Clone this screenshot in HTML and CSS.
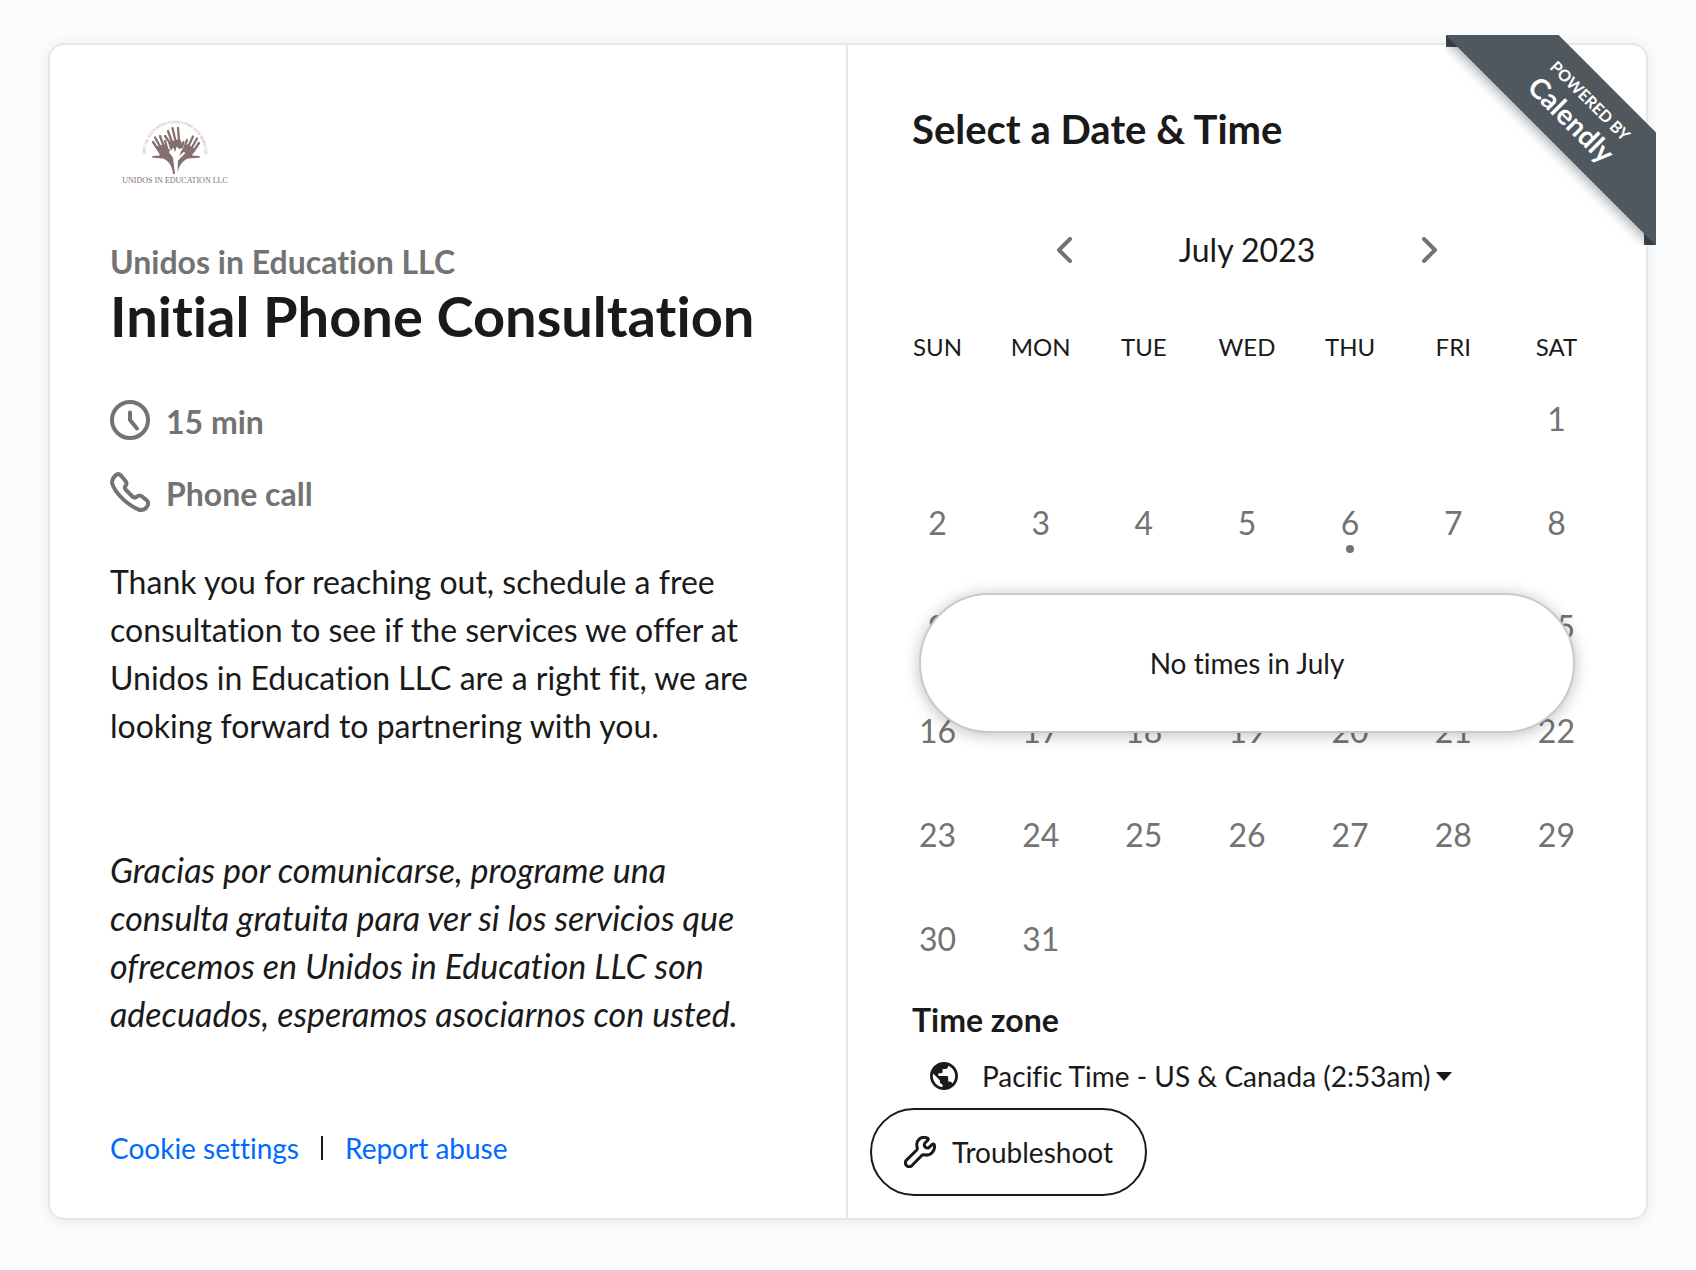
FILE: index.html
```html
<!DOCTYPE html>
<html lang="en">
    <head>
        <meta charset="utf-8">
        <meta name="viewport" content="width=device-width, initial-scale=1">
        <title>Initial Phone Consultation</title>
        <link rel="stylesheet" href="styles.css">
    </head>
    <body>
        <main class="booking">
            <!-- Event details -->
            <section class="details">
                <svg class="logo" viewBox="10 5 130 95" role="img" aria-label="Unidos in Education LLC">
                    <path id="logoArc" d="M47 62 A29.500 29.500 0 1 1 103 62" fill="none"/>
                    <text class="logo-ring"><textPath href="#logoArc" startOffset="50%" text-anchor="middle">SPECIAL EDUCATION CONSULTING AND SERVICES</textPath></text>
                    <g fill="#86706f">
                        <path d="M73 74 C72.500 68 70 61 63 58.500 L53 57.800 Q51 56.800 53 56 L60 55.500 L56 47 L64 44 L70 50 L73 58 L75 74 Z"/>
                        <path d="M77.500 74 C78 67 82 61 88 58.500 L99 57.800 Q101 56.800 99 56 L92 55.500 L95 49 L87 44 L81 51 L78 60 Z"/>
                        <path d="M68 42 L80 39 L83 46 L81 49 L77 48 L75 52 L70 49 Z"/>
                    </g>
                    <g fill="none" stroke="#86706f" stroke-linecap="round" stroke-width="2.300">
                        <path d="M59 51 L53 42M61 48 L55 37.500M64 47 L60 36M67 48 L65 41"/>
                        <path d="M70 43 L65 36M72 42 L68 31M75.500 41 L72.500 28M79 41 L78 28M82 47 L83.500 42"/>
                        <path d="M93 52 L99 43M91 49 L97 38.500M88 47 L93 36.500M84 49 L87 40"/>
                    </g>
                    <path class="logo-hand" d="M76 73 V58M75 58 L70 52M75 57 L73 49M76 56 L77 48M78 57 L80 50M78 59 L84 53"/>
                    <text class="logo-name" x="75" y="83" text-anchor="middle">UNIDOS IN EDUCATION LLC</text>
                </svg>
                <h4 class="host">Unidos in Education LLC</h4>
                <h1 class="event-name">Initial Phone Consultation</h1>
                <ul class="facts">
                    <li>
                        <svg class="fact-icon" viewBox="0 0 40 40" aria-hidden="true">
                            <circle cx="20" cy="20" r="18"/>
                            <path d="M20 12.500 V20 L27 28.500"/>
                        </svg>
                        15 min
                    </li>
                    <li>
                        <svg class="fact-icon" viewBox="0 0 40 40" aria-hidden="true">
                            <path d="M4.500 4.500 L6 3 Q8.500 1 11 3.500 L15.500 9 Q17.500 11.500 15.500 14 Q14 16 16 18 L23 25 Q25 26.500 27 24.500 Q29.500 22.500 32 24.500 L37 28.500 Q39.500 31.500 37 34.500 L36 36 Q33 39 28.500 37.500 Q18 33 10 24 Q4 17.500 2.200 11.500 Q1.500 7.500 4.500 4.500 Z"/>
                        </svg>
                        Phone call
                    </li>
                </ul>
                <div class="description">
                    <p>Thank you for reaching out, schedule a free<br>
                        consultation to see if the services we offer at<br>
                        Unidos in Education LLC are a right fit, we are<br>
                        looking forward to partnering with you.</p>
                    <p lang="es"><em>Gracias por comunicarse, programe una<br>
                        consulta gratuita para ver si los servicios que<br>
                        ofrecemos en Unidos in Education LLC son<br>
                        adecuados, esperamos asociarnos con usted.</em></p>
                </div>
                <footer class="links">
                    <a href="#cookies">Cookie settings</a>
                    <span class="bar"></span>
                    <a href="#report">Report abuse</a>
                </footer>
            </section>

            <!-- Date picker -->
            <section class="picker">
                <h2>Select a Date &amp; Time</h2>
                <div class="month">
                    <button type="button" class="arrow" aria-label="Previous month">
                        <svg viewBox="0 0 16 26"><path d="M14 2 L3 13 L14 24"/></svg>
                    </button>
                    <div class="month-name">July 2023</div>
                    <button type="button" class="arrow" aria-label="Next month">
                        <svg viewBox="0 0 16 26"><path d="M2 2 L13 13 L2 24"/></svg>
                    </button>
                </div>
                <div class="calendar">
                    <table>
                        <thead>
                            <tr><th>SUN</th><th>MON</th><th>TUE</th><th>WED</th><th>THU</th><th>FRI</th><th>SAT</th></tr>
                        </thead>
                        <tbody>
                            <tr>
                                <td></td><td></td><td></td><td></td><td></td><td></td>
                                <td><button type="button">1</button></td>
                            </tr>
                            <tr>
                                <td><button type="button">2</button></td>
                                <td><button type="button">3</button></td>
                                <td><button type="button">4</button></td>
                                <td><button type="button">5</button></td>
                                <td><button type="button" class="today">6</button></td>
                                <td><button type="button">7</button></td>
                                <td><button type="button">8</button></td>
                            </tr>
                            <tr>
                                <td><button type="button">9</button></td>
                                <td><button type="button">10</button></td>
                                <td><button type="button">11</button></td>
                                <td><button type="button">12</button></td>
                                <td><button type="button">13</button></td>
                                <td><button type="button">14</button></td>
                                <td><button type="button">15</button></td>
                            </tr>
                            <tr>
                                <td><button type="button">16</button></td>
                                <td><button type="button">17</button></td>
                                <td><button type="button">18</button></td>
                                <td><button type="button">19</button></td>
                                <td><button type="button">20</button></td>
                                <td><button type="button">21</button></td>
                                <td><button type="button">22</button></td>
                            </tr>
                            <tr>
                                <td><button type="button">23</button></td>
                                <td><button type="button">24</button></td>
                                <td><button type="button">25</button></td>
                                <td><button type="button">26</button></td>
                                <td><button type="button">27</button></td>
                                <td><button type="button">28</button></td>
                                <td><button type="button">29</button></td>
                            </tr>
                            <tr>
                                <td><button type="button">30</button></td>
                                <td><button type="button">31</button></td>
                                <td></td><td></td><td></td><td></td><td></td>
                            </tr>
                        </tbody>
                    </table>
                    <div class="notice" role="status">No times in July</div>
                </div>
                <label class="zone-label" for="timezone">Time zone</label>
                <div class="zone">
                    <svg class="globe" viewBox="2 2 20 20" aria-hidden="true"><path d="M12 2C6.480 2 2 6.480 2 12s4.480 10 10 10 10-4.480 10-10S17.520 2 12 2zm-1 17.930c-3.950-.49-7-3.850-7-7.930 0-.62.080-1.210.21-1.790L9 15v1c0 1.100.9 2 2 2v1.930zm6.900-2.540c-.26-.81-1-1.390-1.900-1.390h-1v-3c0-.55-.45-1-1-1H8v-2h2c.55 0 1-.45 1-1V7h2c1.100 0 2-.9 2-2v-.41c2.930 1.190 5 4.060 5 7.410 0 2.080-.8 3.970-2.100 5.390z"/></svg>
                    <select id="timezone" name="timezone">
                        <option>Pacific Time - US &amp; Canada (2:53am)</option>
                    </select>
                    <svg class="caret" viewBox="0 0 16 9" aria-hidden="true"><path d="M0 0 H16 L8 9 Z"/></svg>
                </div>
                <button type="button" class="troubleshoot">
                    <svg viewBox="0 0 32 32" aria-hidden="true"><path d="M22.500 1.800 Q17 0 13.800 4.800 Q12 8 13.300 12 Q13.500 13.300 12.500 14.300 L2.700 23.800 Q0 27 2.600 29.600 Q5.200 32 8.200 29.300 L17.700 19.500 Q18.700 18.500 20 18.800 Q24.500 20 28 16.800 Q31.500 13 30.200 8.600 Q29.300 7.300 28 8.600 L25 11.500 Q23.200 12.800 21.300 11.200 Q19.400 9 21 7 L24 4 Q25 2.500 22.500 1.800 Z"/></svg>
                    Troubleshoot
                </button>
            </section>

            <a class="badge" href="#calendly">
                <span class="ribbon">
                    <span class="powered">POWERED BY</span>
                    <span class="brand">Calendly</span>
                </span>
            </a>
        </main>
    </body>
</html>
```
FILE: styles.css
```css
* {
  box-sizing: border-box;
}

body {
  margin: 0;
  padding: 43px 48px 50px;
  background: #fbfcfe;
  color: #1a1a1a;
  font-family: Lato, "Liberation Sans", sans-serif;
  font-variant-ligatures: none;
}

h1, h2, h4, p, ul {
  margin: 0;
  padding: 0;
}

button, select {
  font-family: inherit;
  font-variant-ligatures: none;
  color: inherit;
  background: none;
  border: none;
  padding: 0;
  cursor: pointer;
}

svg {
  display: block;
  flex: none;
}

.booking {
  position: relative;
  display: grid;
  grid-template-columns: 1fr 1fr;
  background: white;
  border: 2px solid #e7e7e7;
  border-radius: 16px;
  box-shadow: 0 2px 16px rgba(0, 0, 0, 0.08);
}

/* Event details */
.details {
  display: flex;
  flex-direction: column;
  padding: 60px 40px 50px 60px;
  border-right: 2px solid #e7e7e7;
}

.logo {
  width: 130px;
  height: 95px;
}

.logo-ring {
  font-family: "Liberation Serif", serif;
  font-size: 4px;
  fill: #a39795;
}

.logo-name {
  font-family: "Liberation Serif", serif;
  font-size: 8px;
  fill: #86706f;
}

.logo-hand {
  fill: none;
  stroke: white;
  stroke-width: 2;
  stroke-linecap: round;
}

.host {
  margin-top: 42px;
  color: #737373;
  font-size: 32px;
  line-height: 40px;
}

.event-name {
  font-size: 56px;
  line-height: 64px;
  margin-top: 2px;
  white-space: nowrap;
}

.facts {
  display: flex;
  flex-direction: column;
  gap: 28px;
  margin-top: 52px;
  list-style: none;
  color: #737373;
  font-size: 32px;
  font-weight: bold;
  line-height: 44px;
}

.facts li {
  display: flex;
  gap: 16px;
}

.fact-icon {
  width: 40px;
  height: 40px;
  fill: none;
  stroke: #737373;
  stroke-width: 4;
  stroke-linecap: round;
  stroke-linejoin: round;
}

.description {
  margin-top: 42px;
  font-size: 32px;
  line-height: 48px;
}

.description p + p {
  margin-top: 96px;
  font-size: 34px;
}

.links {
  display: flex;
  align-items: center;
  gap: 22px;
  margin-top: auto;
  font-size: 28px;
  line-height: 40px;
}

.links a {
  color: #0069ff;
  text-decoration: none;
}

.bar {
  width: 2px;
  height: 24px;
  background: #1a1a1a;
}

/* Date picker */
.picker {
  display: flex;
  flex-direction: column;
  padding: 60px 38px 22px 22px;
}

.picker h2 {
  margin-left: 42px;
  font-size: 40px;
  line-height: 48px;
}

.month {
  display: flex;
  align-items: center;
  justify-content: center;
  gap: 94px;
  margin: 73px 0 52px 16px;
}

.month-name {
  width: 162px;
  font-size: 32px;
  line-height: 48px;
  text-align: center;
}

.arrow svg {
  width: 16px;
  height: 26px;
  fill: none;
  stroke: #737373;
  stroke-width: 4;
  stroke-linecap: round;
  stroke-linejoin: round;
}

.calendar {
  position: relative;
  margin-left: 16px;
}

.calendar table {
  width: 100%;
  table-layout: fixed;
  border-collapse: collapse;
}

.calendar th {
  height: 40px;
  padding: 0;
  font-size: 24px;
  font-weight: normal;
}

.calendar td {
  height: 104px;
  padding: 0;
  text-align: center;
}

.calendar td button {
  position: relative;
  width: 88px;
  height: 88px;
  border-radius: 50%;
  color: #737373;
  font-size: 32px;
}

.today::after {
  content: "";
  position: absolute;
  left: 40px;
  bottom: 13px;
  width: 8px;
  height: 8px;
  border-radius: 50%;
  background: #737373;
}

.notice {
  position: absolute;
  top: 267px;
  left: 33px;
  right: 33px;
  height: 140px;
  display: flex;
  align-items: center;
  justify-content: center;
  background: white;
  border: 2px solid #c9c9c9;
  border-radius: 70px;
  box-shadow: 0 2px 16px rgba(0, 0, 0, 0.25);
  font-size: 28px;
}

.zone-label {
  margin: 10px 0 16px 42px;
  font-size: 32px;
  font-weight: bold;
  line-height: 40px;
}

.zone {
  display: flex;
  align-items: center;
  margin-left: 60px;
  height: 40px;
}

.globe {
  width: 28px;
  height: 28px;
  margin-right: 24px;
  fill: #1a1a1a;
}

.zone select {
  appearance: none;
  height: 40px;
  font-size: 28px;
}

.caret {
  width: 16px;
  height: 9px;
  margin-left: 4px;
  fill: #1a1a1a;
}

.troubleshoot {
  display: flex;
  align-items: center;
  align-self: flex-start;
  gap: 16px;
  height: 88px;
  margin-top: 12px;
  padding: 0 32px;
  border: 2px solid #1a1a1a;
  border-radius: 44px;
  font-size: 28px;
}

.troubleshoot svg {
  width: 32px;
  height: 32px;
  fill: none;
  stroke: #1a1a1a;
  stroke-width: 3;
  stroke-linejoin: round;
}

/* Corner ribbon */
.badge {
  position: absolute;
  top: -10px;
  right: -10px;
  width: 210px;
  height: 210px;
  overflow: hidden;
  color: white;
  text-decoration: none;
}

.badge::before, .badge::after {
  content: "";
  position: absolute;
  width: 12px;
  height: 12px;
  background: #454a54;
}

.badge::before {
  top: 0;
  left: 0;
}

.badge::after {
  right: 0;
  bottom: 0;
}

.ribbon {
  position: absolute;
  z-index: 1;
  top: 37px;
  left: -22px;
  width: 310px;
  height: 80px;
  display: flex;
  flex-direction: column;
  align-items: center;
  justify-content: center;
  background: #50585f;
  box-shadow: 0 8px 12px -4px rgba(0, 0, 0, 0.3);
  transform: rotate(45deg);
  font-weight: bold;
}

.powered {
  font-size: 16px;
  line-height: 20px;
}

.brand {
  font-size: 28px;
  line-height: 32px;
}
```
